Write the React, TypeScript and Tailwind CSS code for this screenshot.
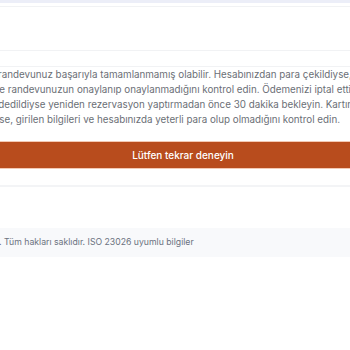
export default function App() {
  const lines = [
    { text: 'randevunuz başarıyla tamamlanmamış olabilir. Hesabınızdan para çekildiyse, 30', shift: '-ml-[2px]' },
    { text: 've randevunuzun onaylanıp onaylanmadığını kontrol edin. Ödemenizi iptal ettiyseniz', shift: '-ml-[6px]' },
    { text: 'reddedildiyse yeniden rezervasyon yaptırmadan önce 30 dakika bekleyin. Kartınız', shift: '-ml-[17px]' },
    { text: 'ise, girilen bilgileri ve hesabınızda yeterli para olup olmadığını kontrol edin.', shift: '-ml-[3px]' },
  ]

  return (
    <div className="w-[350px] h-[350px] overflow-hidden bg-white font-['Inter',sans-serif]">
      <div className="h-[3px] bg-[#eceef8]" />
      <div className="h-[3px]" />
      <div className="h-[44px] border-t border-[#f1f2f4]" />
      <div className="h-[16px] border-t border-[#f1f2f4]" />
      <div className="border-t border-[#f1f2f4]">
        <div className="text-[9.8px] leading-[15px] text-[#6b6f76]">
          {lines.map((l) => (
            <div key={l.text} className="whitespace-nowrap overflow-hidden">
              <span className={`inline-block ${l.shift}`}>{l.text}</span>
            </div>
          ))}
        </div>
        <div className="mt-[14px] border-y border-[#f3c9b4]">
          <div className="h-[26px] bg-[#b84c1d] flex items-center justify-center pl-[16px] text-white text-[10px] font-medium">
            Lütfen tekrar deneyin
          </div>
        </div>
      </div>
      <div className="h-[16px]" />
      <div className="h-[43px] border-t-2 border-[#f3f4f6]" />
      <div className="h-[29px] bg-[#f8f9fb] flex items-center">
        <span className="whitespace-nowrap text-[8.7px] text-[#6b7280] -ml-[1px]">
          . Tüm hakları saklıdır. ISO 23026 uyumlu bilgiler
        </span>
      </div>
    </div>
  )
}
